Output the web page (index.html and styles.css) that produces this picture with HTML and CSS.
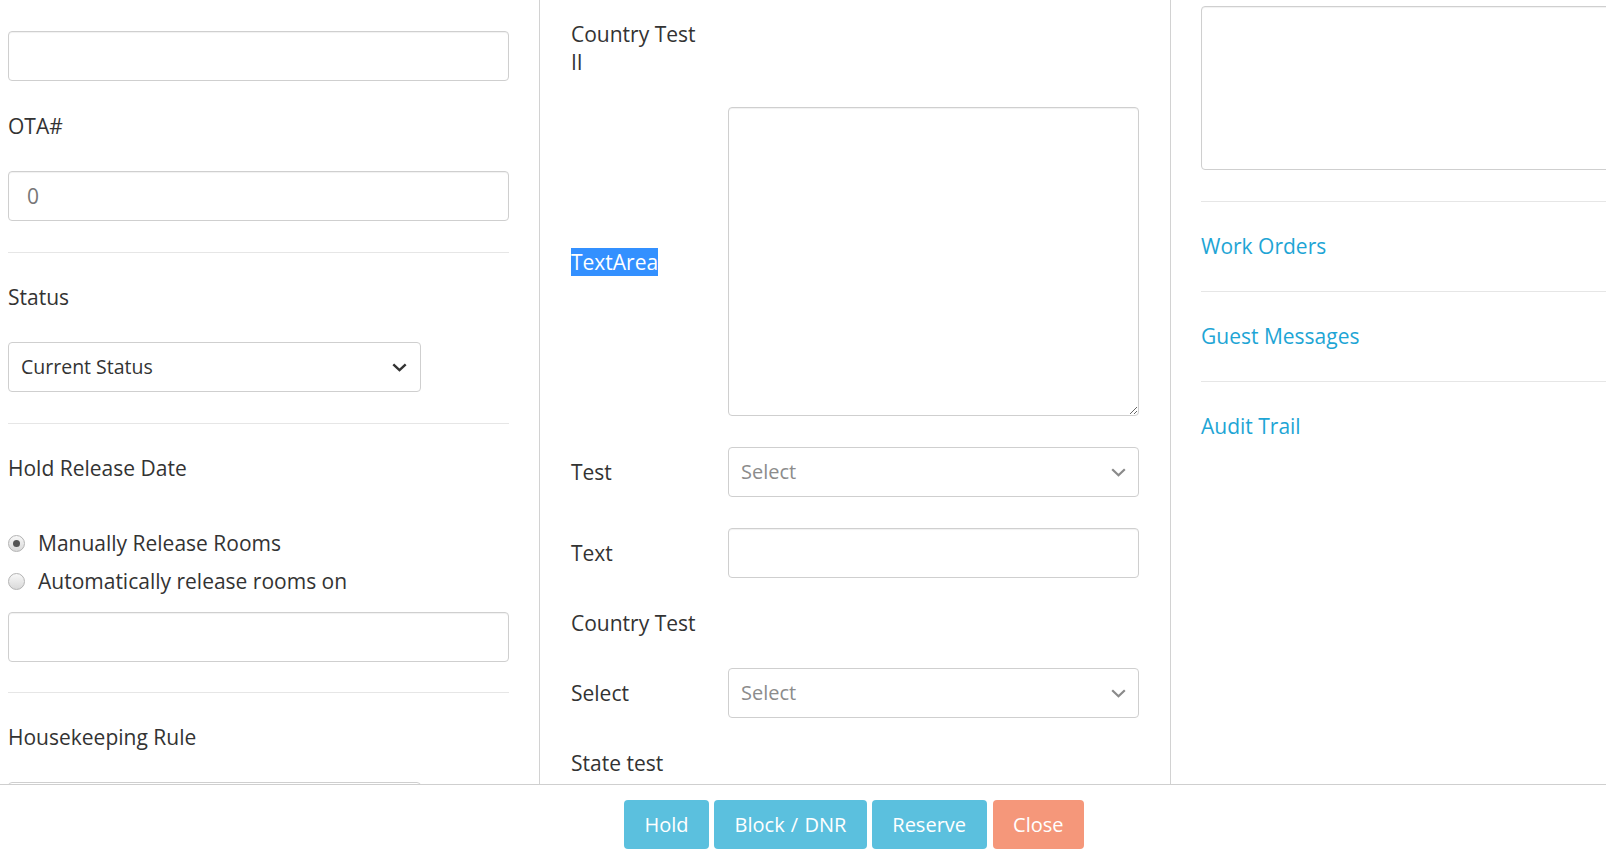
FILE: index.html
```html
<!DOCTYPE html>
<html lang="en">
<head>
<meta charset="utf-8">
<title>Group Block</title>
<link rel="stylesheet" href="styles.css">
</head>
<body>
<div class="page">
  <main class="columns">
    <section class="col col-left">
      <div class="input mb31"></div>
      <div class="label mb31">OTA#</div>
      <div class="input mb31"><span class="input-val">0</span></div>
      <div class="rule mb30"></div>
      <div class="label mb31">Status</div>
      <div class="select select-narrow mb31">
        <span class="select-text">Current Status</span>
        <svg class="chev chev-dark" width="15" height="9" viewBox="0 0 15 9"><path d="M1.3 1.3 L7.5 7.2 L13.7 1.3" fill="none" stroke="#333" stroke-width="2.4"/></svg>
      </div>
      <div class="rule mb30"></div>
      <div class="label mb47">Hold Release Date</div>
      <label class="radio-row mb10"><span class="radio checked"></span><span>Manually Release Rooms</span></label>
      <label class="radio-row mb17"><span class="radio"></span><span>Automatically release rooms on</span></label>
      <div class="input mb30"></div>
      <div class="rule mb30"></div>
      <div class="label mb31">Housekeeping Rule</div>
      <div class="select select-narrow"></div>
    </section>

    <section class="col col-mid">
      <div class="row mb31"><div class="row-label">Country Test II</div></div>
      <div class="row mb31">
        <div class="row-label"><span class="sel">TextArea</span></div>
        <textarea class="textarea"></textarea>
      </div>
      <div class="row mb31">
        <div class="row-label">Test</div>
        <div class="select grow">
          <span class="select-placeholder">Select</span>
          <svg class="chev" width="15" height="9" viewBox="0 0 15 9"><path d="M1.2 1.2 L7.5 7.3 L13.8 1.2" fill="none" stroke="#8a8a8a" stroke-width="2.2"/></svg>
        </div>
      </div>
      <div class="row mb31">
        <div class="row-label">Text</div>
        <div class="input grow"></div>
      </div>
      <div class="row mb31"><div class="row-label">Country Test</div></div>
      <div class="row mb31">
        <div class="row-label">Select</div>
        <div class="select grow">
          <span class="select-placeholder">Select</span>
          <svg class="chev" width="15" height="9" viewBox="0 0 15 9"><path d="M1.2 1.2 L7.5 7.3 L13.8 1.2" fill="none" stroke="#8a8a8a" stroke-width="2.2"/></svg>
        </div>
      </div>
      <div class="row"><div class="row-label">State test</div></div>
    </section>

    <section class="col col-right">
      <textarea class="textarea textarea-notes"></textarea>
      <div class="rule mb30"></div>
      <a class="link mb31" href="#">Work Orders</a>
      <div class="rule mb30"></div>
      <a class="link mb31" href="#">Guest Messages</a>
      <div class="rule mb30"></div>
      <a class="link" href="#">Audit Trail</a>
    </section>
  </main>

  <footer class="footer">
    <button class="btn btn-info">Hold</button>
    <button class="btn btn-info btn-wide">Block / DNR</button>
    <button class="btn btn-info">Reserve</button>
    <button class="btn btn-close">Close</button>
  </footer>
</div>
</body>
</html>
```

FILE: styles.css
```css
html, body {
  margin: 0;
  padding: 0;
  background: #fff;
  overflow: hidden;
}

body {
  font-family: "Open Sans", "Liberation Sans", sans-serif;
  font-size: 21px;
  line-height: 28px;
  color: #333;
}

.page {
  width: 1606px;
  height: 852px;
  display: flex;
  flex-direction: column;
}

.columns {
  height: 784px;
  display: flex;
  overflow: hidden;
  flex: none;
}

.col {
  box-sizing: border-box;
  display: flex;
  flex-direction: column;
  align-items: flex-start;
  flex: none;
}

.col-left {
  width: 540px;
  padding: 31px 30px 0 8px;
  border-right: 1px solid #d2d2d2;
}

.col-mid {
  width: 631px;
  padding: 20px 31px 0 31px;
  border-right: 1px solid #d2d2d2;
}

.col-right {
  width: 631px;
  padding: 6px 0 0 30px;
}

.label {
  height: 28px;
  white-space: nowrap;
}

.input {
  box-sizing: border-box;
  width: 100%;
  height: 50px;
  border: 1px solid #cfcfcf;
  border-radius: 4px;
  box-shadow: inset 0 1px 1px rgba(0, 0, 0, 0.06);
  display: flex;
  align-items: center;
  padding: 0 17px;
  flex: none;
}

.input-val {
  color: #777;
  padding-left: 1px;
}

.rule {
  width: 100%;
  height: 1px;
  background: #e6e6e6;
  flex: none;
}

.select {
  box-sizing: border-box;
  height: 50px;
  border: 1px solid #cfcfcf;
  border-radius: 4px;
  display: flex;
  align-items: center;
  justify-content: space-between;
  padding: 0 12px 0 12px;
  flex: none;
  background: #fff;
}

.select-narrow {
  width: 413px;
  padding-right: 13px;
}

.select-text {
  color: #333;
  font-size: 19.5px;
}

.select-placeholder {
  color: #8c8c8c;
  font-size: 20px;
}

.chev {
  display: block;
  flex: none;
}

.radio-row {
  display: flex;
  align-items: center;
  height: 28px;
  gap: 13px;
  color: #333;
  white-space: nowrap;
}

.radio {
  box-sizing: border-box;
  width: 17px;
  height: 17px;
  border-radius: 50%;
  border: 1px solid #b3b3b3;
  background: linear-gradient(#f8f8f8, #d9d9d9);
  display: flex;
  align-items: center;
  justify-content: center;
  flex: none;
}

.radio.checked::after {
  content: "";
  width: 7px;
  height: 7px;
  border-radius: 50%;
  background: #555;
}

.row {
  width: 100%;
  display: flex;
  align-items: center;
}

.row-label {
  box-sizing: border-box;
  width: 157px;
  padding-right: 20px;
  flex: none;
}

.grow {
  flex: 1;
  width: auto;
}

.sel {
  background: #3390ff;
  color: #fff;
}

.textarea {
  box-sizing: border-box;
  flex: 1;
  height: 309px;
  border: 1px solid #cfcfcf;
  border-radius: 4px;
  box-shadow: inset 0 1px 1px rgba(0, 0, 0, 0.06);
  margin: 0;
  padding: 8px 12px;
  font: inherit;
  background: #fff;
}

.textarea-notes {
  flex: none;
  width: 600px;
  height: 164px;
  margin-bottom: 31px;
}

.link {
  display: block;
  height: 28px;
  color: #1ea5d5;
  text-decoration: none;
  white-space: nowrap;
}

.mb10 { margin-bottom: 10px; }
.mb17 { margin-bottom: 17px; }
.mb30 { margin-bottom: 30px; }
.mb31 { margin-bottom: 31px; }
.mb47 { margin-bottom: 47px; }

.footer {
  flex: 1;
  border-top: 1px solid #cfcfcf;
  display: flex;
  align-items: flex-start;
  padding: 15px 0 0 624px;
  gap: 5px;
}

.btn {
  height: 49px;
  border: 0;
  border-radius: 4px;
  padding: 0 20.5px;
  font-family: "Open Sans", "Liberation Sans", sans-serif;
  font-size: 20px;
  color: #fff;
  cursor: pointer;
}

.btn-wide {
  word-spacing: 1px;
}

.btn-info {
  background: #5bc0de;
}

.btn-close {
  background: #f5977a;
  margin-left: 1px;
}
```
